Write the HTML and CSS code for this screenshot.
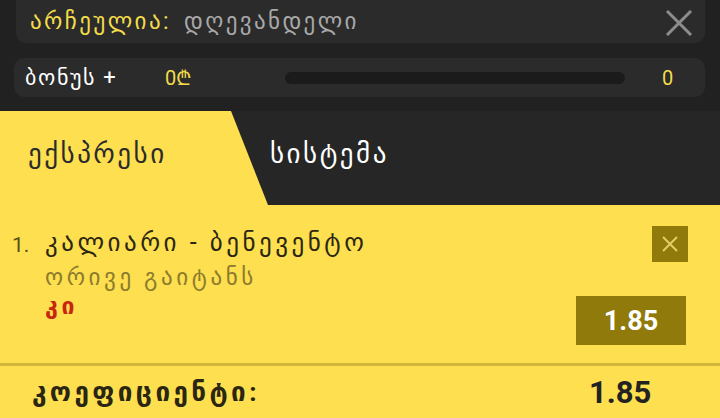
FILE: index.html
```html
<!DOCTYPE html>
<html lang="ka">
<head>
    <meta charset="UTF-8">
    <meta name="viewport" content="width=device-width, initial-scale=1.0">
    <title>ბილეთი</title>
    <link rel="stylesheet" href="styles.css">
</head>
<body>
    <div class="selected">
        <span class="selected-label">არჩეულია:</span>
        <span class="selected-value">დღევანდელი</span>
        <svg class="close-icon" width="28" height="26" viewBox="0 0 28 26">
            <path d="M2 1 L26 25 M26 1 L2 25" stroke="#8c8c8c" stroke-width="3" fill="none"/>
        </svg>
    </div>

    <div class="bonus">
        <span class="bonus-label">ბონუს +</span>
        <span class="bonus-amount">0₾</span>
        <div class="bonus-track"></div>
        <span class="bonus-count">0</span>
    </div>

    <div class="tabs">
        <div class="tab tab-active">ექსპრესი</div>
        <div class="tab">სისტემა</div>
    </div>

    <div class="bet">
        <div class="bet-num">1.</div>
        <div class="bet-info">
            <div class="bet-title">კალიარი - ბენევენტო</div>
            <div class="bet-market">ორივე გაიტანს</div>
            <div class="bet-pick">კი</div>
        </div>
        <div class="bet-side">
            <button class="bet-remove">
                <svg width="18" height="18" viewBox="0 0 18 18">
                    <path d="M2 2 L16 16 M16 2 L2 16" stroke="#e3cd66" stroke-width="2" fill="none"/>
                </svg>
            </button>
            <div class="bet-odds">1.85</div>
        </div>
    </div>

    <div class="total">
        <span class="total-label">კოეფიციენტი:</span>
        <span class="total-value">1.85</span>
    </div>
</body>
</html>
```
FILE: styles.css
```css
body {
    margin: 0;
    background-color: #212121;
    font-family: Roboto, "DejaVu Sans", sans-serif;
    overflow: hidden;
}

.selected {
    display: flex;
    align-items: center;
    height: 43px;
    margin: 0 15px 0 16px;
    padding: 0 12px 0 14px;
    background-color: #2b2b2b;
    border-radius: 0 0 10px 10px;
    font-size: 23px;
    letter-spacing: 2.4px;
}
.selected-label { color: #f3dc4a; }
.selected-value { color: #a8a8a8; margin-left: 13px; }
.close-icon { margin-left: auto; margin-top: 2px; }

.bonus {
    display: flex;
    align-items: center;
    height: 39px;
    margin: 15px 15px 0 14px;
    background-color: #2b2b2b;
    border-radius: 10px;
    font-size: 22px;
}
.bonus-label {
    color: #fff;
    width: 151px;
    padding-left: 11px;
    box-sizing: border-box;
    letter-spacing: 1.6px;
}
.bonus-amount { color: #f3dc4a; width: 120px; font-size: 20px; }
.bonus-track {
    flex: 1;
    height: 12px;
    background-color: #1b1b1b;
    border-radius: 6px;
}
.bonus-count {
    color: #f3dc4a;
    width: 80px;
    padding-left: 37px;
    box-sizing: border-box;
    font-size: 20px;
}

.tabs {
    display: flex;
    margin-top: 14px;
    height: 94px;
    background-color: #262626;
}
.tab {
    display: flex;
    align-items: center;
    font-size: 27px;
    letter-spacing: 2.5px;
    color: #fff;
    padding-bottom: 8px;
}
.tab-active {
    width: 268px;
    padding-left: 28px;
    box-sizing: border-box;
    background-color: #fddf4f;
    color: #2b2b2b;
    clip-path: polygon(0 0, 231px 0, 100% 100%, 0 100%);
}
.tab + .tab { padding-left: 2px; }

.bet {
    display: flex;
    background-color: #fddf4f;
    height: 158px;
    padding: 0 32px 0 12px;
    border-bottom: 3px solid #d3b53c;
}
.bet-num {
    font-size: 21px;
    color: #5a4f1c;
    padding-top: 28px;
    width: 33px;
}
.bet-info { flex: 1; padding-top: 23px; font-size: 23px; letter-spacing: 3.6px; }
.bet-title { color: #2b2612; font-size: 25px; letter-spacing: 3.5px; }
.bet-market { color: #8c7b2c; margin-top: 7px; }
.bet-pick { color: #c8250f; font-weight: bold; margin-top: 2px; }
.bet-side {
    display: flex;
    flex-direction: column;
    align-items: flex-end;
    padding-top: 21px;
}
.bet-remove {
    width: 36px;
    height: 36px;
    padding: 0;
    border: none;
    background-color: #8f7a0b;
    display: flex;
    align-items: center;
    justify-content: center;
}
.bet-odds {
    width: 110px;
    height: 49px;
    margin-top: 34px;
    margin-right: 2px;
    background-color: #8f7a0b;
    color: #fff;
    font-size: 27px;
    font-weight: bold;
    display: flex;
    align-items: center;
    justify-content: center;
}

.total {
    display: flex;
    align-items: center;
    height: 52px;
    padding-left: 32px;
    background-color: #fddf4f;
    color: #2b2612;
    font-weight: bold;
}
.total-label { font-size: 26px; letter-spacing: 3.4px; width: 557px; }
.total-value { font-size: 31px; color: #222; }
```
